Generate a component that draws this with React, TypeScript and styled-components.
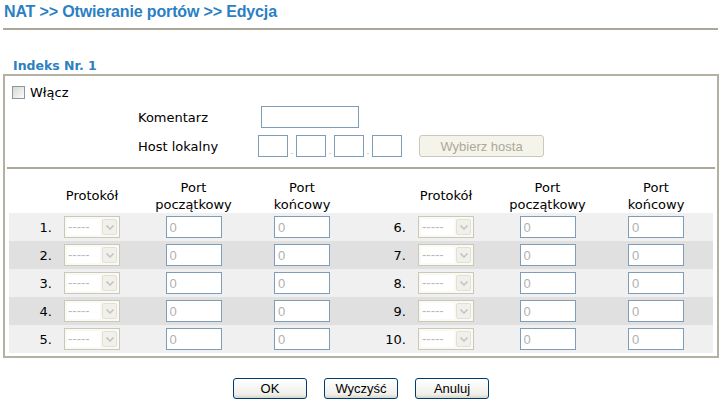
import styled, { createGlobalStyle } from "styled-components";

const GlobalStyle = createGlobalStyle`
  body {
    margin: 0;
    background: #fff;
    color: #000;
    font-family: "DejaVu Sans", Verdana, sans-serif;
    font-size: 13px;
  }
`;

const COLUMNS = "51px 64px 139px 78px 73px 64px 139px 78px 18px";

const Page = styled.div`
  width: 722px;
`;

const Title = styled.div`
  margin: 0 4px 0 3px;
  padding: 0 0 4px 1px;
  height: 24px;
  line-height: 24px;
  font-family: "Liberation Sans", Arial, sans-serif;
  font-weight: bold;
  font-size: 16px;
  letter-spacing: -0.15px;
  color: #2b7fc3;
  border-bottom: 2px solid #aca899;
`;

const SectionLabel = styled.div`
  margin-top: 28px;
  padding-left: 13px;
  height: 16px;
  line-height: 16px;
  font-weight: bold;
  font-size: 12.5px;
  color: #2b7fc3;
`;

const Fieldset = styled.div`
  margin-left: 3px;
  width: 716px;
  box-sizing: border-box;
  border: 2px solid #b4b1a2;
  padding-bottom: 3px;
`;

const EnableRow = styled.label`
  display: flex;
  align-items: center;
  gap: 5px;
  height: 22px;
  margin-top: 5px;
  padding-left: 7px;
`;

const Checkbox = styled.span`
  width: 13px;
  height: 13px;
  box-sizing: border-box;
  border: 1px solid #8796a8;
  background: linear-gradient(135deg, #d8d8d2, #fbfbf8);
`;

const FieldRow = styled.div<{ $top: number }>`
  display: grid;
  grid-template-columns: 120px auto;
  align-items: center;
  height: 22px;
  margin-top: ${(p) => p.$top}px;
  padding-left: 133px;
`;

const FieldValue = styled.div`
  display: flex;
  align-items: center;
`;

const TextInput = styled.input<{ $width: number; $offset?: number }>`
  width: ${(p) => p.$width}px;
  height: 22px;
  margin-left: ${(p) => p.$offset ?? 0}px;
  box-sizing: border-box;
  border: 1px solid #7f9db9;
  padding: 0 3px;
  background: #fff;
  color: #b0b0b0;
  font-family: "Liberation Sans", Arial, sans-serif;
  font-size: 13px;
  outline: none;
`;

const Dot = styled.span`
  width: 8px;
  height: 22px;
  display: flex;
  align-items: flex-end;
  justify-content: center;
  color: #a8a8a8;
  font-size: 9px;
  line-height: 12px;
`;

const HostButton = styled.button`
  margin-left: 17px;
  width: 125px;
  height: 22px;
  border: 1px solid #cac8bb;
  border-radius: 3px;
  background: #f5f4ea;
  color: #aca899;
  font-family: "Liberation Sans", Arial, sans-serif;
  font-size: 13px;
  padding: 0;
`;

const Separator = styled.div`
  height: 2px;
  margin: 10px 2px 0;
  background: #aca899;
`;

const PortTable = styled.div`
  margin: 9px 4px 0;
  display: flex;
  flex-direction: column;
`;

const HeaderRow = styled.div`
  display: grid;
  grid-template-columns: ${COLUMNS};
  height: 35px;
`;

const HeaderCell = styled.div`
  display: flex;
  align-items: center;
  justify-content: center;
  text-align: center;
  line-height: 17px;
`;

const Row = styled.div<{ $even: boolean }>`
  display: grid;
  grid-template-columns: ${COLUMNS};
  height: 28px;
  align-items: center;
  background: ${(p) => (p.$even ? "#e0e0e0" : "#f0f0f0")};
`;

const NumCell = styled.div`
  text-align: right;
  padding-right: 8px;
`;

const Cell = styled.div`
  display: flex;
  justify-content: center;
`;

const SelectBox = styled.div`
  width: 56px;
  height: 22px;
  box-sizing: border-box;
  border: 1px solid #cbc8b9;
  background: #fafaf4;
  padding: 2px;
  display: flex;
  gap: 2px;
`;

const SelectText = styled.div`
  flex: 1;
  background: #fff;
  color: #b8b8b8;
  font-family: "Liberation Sans", Arial, sans-serif;
  font-size: 13px;
  line-height: 16px;
  padding-left: 1px;
  overflow: hidden;
`;

const SelectArrow = styled.div`
  width: 15px;
  box-sizing: border-box;
  border: 1px solid #e2e0d6;
  border-radius: 2px;
  background: #f1f0ea;
  display: flex;
  align-items: center;
  justify-content: center;
`;

const ButtonBar = styled.div`
  display: flex;
  justify-content: center;
  gap: 17px;
  margin-top: 20px;
`;

const ActionButton = styled.button`
  width: 74px;
  height: 21px;
  padding: 0;
  border: 1px solid #003c74;
  border-radius: 3px;
  background: linear-gradient(#ffffff, #f0efea 80%, #d9d5c9);
  color: #000;
  font-family: "Liberation Sans", Arial, sans-serif;
  font-size: 13px;
`;

const ProtocolSelect = () => (
  <SelectBox>
    <SelectText>-----</SelectText>
    <SelectArrow>
      <svg width="8" height="5" viewBox="0 0 8 5">
        <polyline points="0.5,0.5 4,4 7.5,0.5" fill="none" stroke="#c6c6c6" strokeWidth="1.6" />
      </svg>
    </SelectArrow>
  </SelectBox>
);

const PortCells = ({ n }: { n: number }) => (
  <>
    <NumCell>{n}.</NumCell>
    <Cell>
      <ProtocolSelect />
    </Cell>
    <Cell>
      <TextInput $width={56} defaultValue="0" disabled />
    </Cell>
    <Cell>
      <TextInput $width={56} defaultValue="0" disabled />
    </Cell>
  </>
);

const HeaderCells = () => (
  <>
    <HeaderCell />
    <HeaderCell>Protokół</HeaderCell>
    <HeaderCell>
      Port
      <br />
      początkowy
    </HeaderCell>
    <HeaderCell>
      Port
      <br />
      końcowy
    </HeaderCell>
  </>
);

export default function App() {
  const rows = [1, 2, 3, 4, 5];

  return (
    <Page>
      <GlobalStyle />
      <Title>NAT &gt;&gt; Otwieranie portów &gt;&gt; Edycja</Title>
      <SectionLabel>Indeks Nr. 1</SectionLabel>
      <Fieldset>
        <EnableRow>
          <Checkbox />
          Włącz
        </EnableRow>
        <FieldRow $top={3}>
          <span>Komentarz</span>
          <FieldValue>
            <TextInput $width={98} $offset={3} />
          </FieldValue>
        </FieldRow>
        <FieldRow $top={7}>
          <span>Host lokalny</span>
          <FieldValue>
            <TextInput $width={30} />
            <Dot>.</Dot>
            <TextInput $width={30} />
            <Dot>.</Dot>
            <TextInput $width={30} />
            <Dot>.</Dot>
            <TextInput $width={30} />
            <HostButton disabled>Wybierz hosta</HostButton>
          </FieldValue>
        </FieldRow>
        <Separator />
        <PortTable>
          <HeaderRow>
            <HeaderCells />
            <HeaderCells />
          </HeaderRow>
          {rows.map((n, i) => (
            <Row key={n} $even={i % 2 === 1}>
              <PortCells n={n} />
              <PortCells n={n + 5} />
              <div />
            </Row>
          ))}
        </PortTable>
      </Fieldset>
      <ButtonBar>
        <ActionButton>OK</ActionButton>
        <ActionButton>Wyczyść</ActionButton>
        <ActionButton>Anuluj</ActionButton>
      </ButtonBar>
    </Page>
  );
}
